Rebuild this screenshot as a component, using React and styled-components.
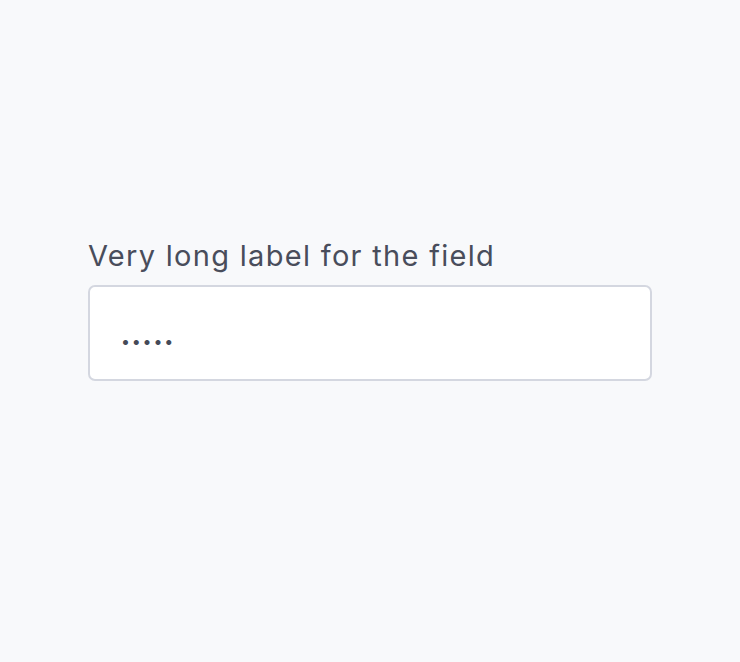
import React from "react";
import styled, { createGlobalStyle } from "styled-components";

const GlobalStyle = createGlobalStyle`
  html, body {
    margin: 0;
    padding: 0;
    background: #f8f9fb;
    font-family: Inter, "Noto Sans", sans-serif;
  }
`;

const Page = styled.div`
  width: 740px;
  height: 662px;
  box-sizing: border-box;
  padding: 236px 88px 0;
`;

const Field = styled.div`
  display: flex;
  flex-direction: column;
  gap: 9px;
`;

const Label = styled.label`
  font-size: 29px;
  line-height: 40px;
  color: #494d5b;
  letter-spacing: 1.3px;
`;

const Input = styled.input`
  box-sizing: border-box;
  width: 100%;
  height: 96px;
  padding: 16px 31px 0;
  border: 2px solid #d4d7e0;
  border-radius: 7px;
  background: #fff;
  font-family: Inter, "Noto Sans", sans-serif;
  font-size: 16px;
  letter-spacing: 1.8px;
  color: #454a58;
  outline: none;
`;

export default function App() {
  return (
    <>
      <GlobalStyle />
      <Page>
        <Field>
          <Label htmlFor="secret">Very long label for the field</Label>
          <Input id="secret" type="password" defaultValue="12345" readOnly />
        </Field>
      </Page>
    </>
  );
}
